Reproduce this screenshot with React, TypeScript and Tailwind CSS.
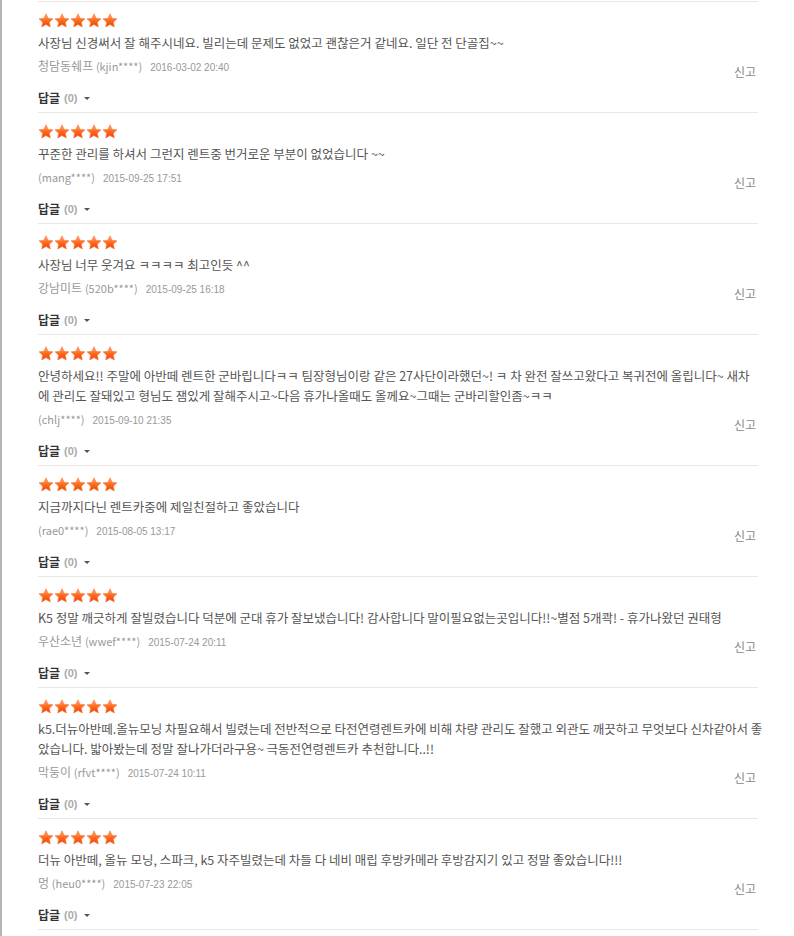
import React from "react";

type Review = {
  lines: string[];
  nick: string;
  id: string;
  date: string;
};

const reviews: Review[] = [
  {
    lines: ["사장님 신경써서 잘 해주시네요. 빌리는데 문제도 없었고 괜찮은거 같네요. 일단 전 단골집~~"],
    nick: "청담동쉐프",
    id: "(kjin****)",
    date: "2016-03-02 20:40",
  },
  {
    lines: ["꾸준한 관리를 하셔서 그런지 렌트중 번거로운 부분이 없었습니다 ~~"],
    nick: "",
    id: "(mang****)",
    date: "2015-09-25 17:51",
  },
  {
    lines: ["사장님 너무 웃겨요 ㅋㅋㅋㅋ 최고인듯 ^^"],
    nick: "강남미트",
    id: "(520b****)",
    date: "2015-09-25 16:18",
  },
  {
    lines: [
      "안녕하세요!! 주말에 아반떼 렌트한 군바립니다ㅋㅋ 팀장형님이랑 같은 27사단이라했던~! ㅋ 차 완전 잘쓰고왔다고 복귀전에 올립니다~ 새차",
      "에 관리도 잘돼있고 형님도 잼있게 잘해주시고~다음 휴가나올때도 올께요~그때는 군바리할인좀~ㅋㅋ",
    ],
    nick: "",
    id: "(chlj****)",
    date: "2015-09-10 21:35",
  },
  {
    lines: ["지금까지다닌 렌트카중에 제일친절하고 좋았습니다"],
    nick: "",
    id: "(rae0****)",
    date: "2015-08-05 13:17",
  },
  {
    lines: ["K5 정말 깨긋하게 잘빌렸습니다 덕분에 군대 휴가 잘보냈습니다! 감사합니다 말이필요없는곳입니다!!~별점 5개콱! - 휴가나왔던 권태형"],
    nick: "우산소년",
    id: "(wwef****)",
    date: "2015-07-24 20:11",
  },
  {
    lines: [
      "k5.더뉴아반떼.올뉴모닝 차필요해서 빌렸는데 전반적으로 타전연령렌트카에 비해 차량 관리도 잘했고 외관도 깨끗하고 무엇보다 신차같아서 좋",
      "았습니다. 밟아봤는데 정말 잘나가더라구용~ 극동전연령렌트카 추천합니다..!!",
    ],
    nick: "막둥이",
    id: "(rfvt****)",
    date: "2015-07-24 10:11",
  },
  {
    lines: ["더뉴 아반떼, 올뉴 모닝, 스파크, k5 자주빌렸는데 차들 다 네비 매립 후방카메라 후방감지기 있고 정말 좋았습니다!!!"],
    nick: "멍",
    id: "(heu0****)",
    date: "2015-07-23 22:05",
  },
];

const Star = () => (
  <svg width="16" height="15" viewBox="0 0 24 23">
    <defs>
      <linearGradient id="starFill" x1="0" y1="0" x2="0" y2="1">
        <stop offset="0" stopColor="#ffb070" />
        <stop offset="0.5" stopColor="#ff6a1e" />
        <stop offset="1" stopColor="#f03c00" />
      </linearGradient>
    </defs>
    <path
      d="M12 1.2l3.2 6.9 7.5.9-5.6 5.1 1.5 7.4L12 17.8l-6.6 3.7 1.5-7.4L1.3 9l7.5-.9z"
      fill="url(#starFill)"
      stroke="#f4804a"
      strokeWidth="1"
      strokeLinejoin="round"
    />
  </svg>
);

const ReviewItem: React.FC<{ review: Review }> = ({ review }) => {
  return (
    <li className="border-t border-[#e8e8e8] pt-[11px] pb-[4px]">
      <div className="flex h-[14px] items-center">
        <Star />
        <Star />
        <Star />
        <Star />
        <Star />
      </div>
      <div className="mt-[6px] text-[12.5px] leading-[20px] text-[#555]">
        {review.lines.map((line, i) => (
          <p key={i} className="whitespace-nowrap">
            {line}
          </p>
        ))}
      </div>
      <div className="mt-[4px] flex justify-between">
        <p className="text-[12px] leading-[18px] text-[#999]">
          {review.nick && <span>{review.nick} </span>}
          <span className="text-[11px]">{review.id}</span>
          <span className="ml-[8px] font-['Liberation_Sans',sans-serif] text-[10px] text-[#999]">
            {review.date}
          </span>
        </p>
        <button className="mt-[7px] mr-[2px] text-[12px] leading-[16px] text-[#888]">
          신고
        </button>
      </div>
      <div className="mt-[8px] flex items-center text-[12px] leading-[20px]">
        <span className="font-bold text-[#333]">답글</span>
        <span className="ml-[4px] font-['Liberation_Sans',sans-serif] text-[11px] font-bold text-[#aaa]">
          (0)
        </span>
        <span className="ml-[6px] mt-[1px] h-0 w-0 border-t-[3px] border-r-[3px] border-l-[3px] border-t-[#555] border-r-transparent border-l-transparent" />
      </div>
    </li>
  );
};

export default function App() {
  return (
    <div className="min-h-[936px] w-[794px] border-l-2 border-[#b5b5b5] bg-white pt-[1px] font-['Noto_Sans_CJK_KR','Noto_Sans_CJK_SC',sans-serif]">
      <ul className="ml-[36px] w-[720px] border-b border-[#e8e8e8]">
        {reviews.map((r, i) => (
          <ReviewItem key={i} review={r} />
        ))}
      </ul>
    </div>
  );
}
